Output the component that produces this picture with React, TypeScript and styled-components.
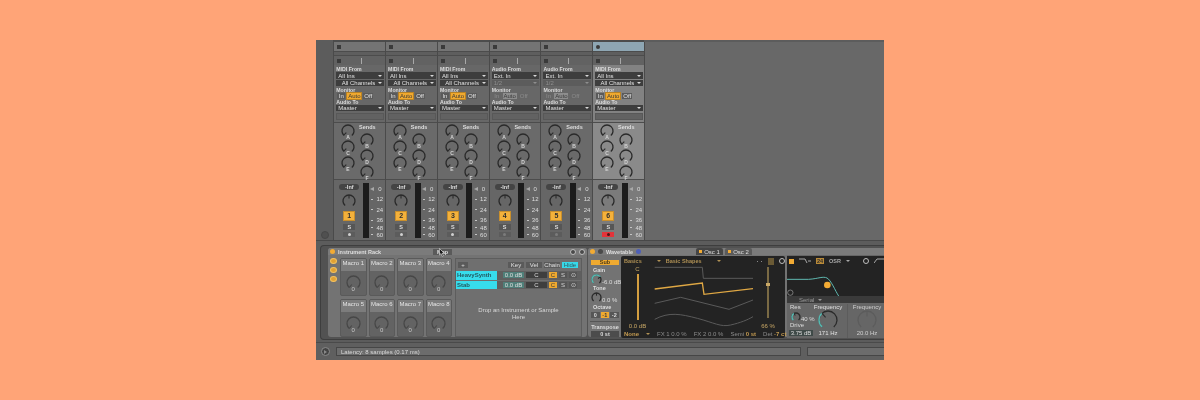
import React from "react";
import styled, { createGlobalStyle } from "styled-components";

const GlobalStyle = createGlobalStyle`
    html, body {
        margin: 0;
        height: 100%;
        background: #ffa477;
    }
    #root {
        height: 100%;
    }
`;

const Page = styled.div`
    height: 100vh;
    display: flex;
    align-items: center;
    justify-content: center;
    font-family: "Liberation Sans", Arial, sans-serif;
    font-weight: 700;
    font-size: 5.5px;
    line-height: 6px;
    color: #dedede;
`;

const Frame = styled.div`
    width: 568px;
    height: 320px;
    background: #5c5c5c;
    display: flex;
    flex-direction: column;
    overflow: hidden;
    filter: blur(0.45px);
`;

/* top half: session mixer */

const TopArea = styled.div`
    height: 200px;
    display: flex;
    flex: none;
`;

const Gutter = styled.div`
    width: 17.3px;
    flex: none;
    display: flex;
    align-items: flex-end;
    justify-content: center;
    padding-bottom: 1px;
`;

const GutterDot = styled.div`
    width: 8px;
    height: 8px;
    box-sizing: border-box;
    border-radius: 50%;
    background: #505050;
    border: 1px solid #474747;
`;

const Strip = styled.div`
    width: 51.8px;
    flex: none;
    box-sizing: border-box;
    border-left: 1px solid #4a4a4a;
    background: #4c4c4c;
    display: flex;
    flex-direction: column;
    padding-top: 2px;
`;

const TitleCell = styled.div<{ $selected?: boolean }>`
    height: 9px;
    background: ${(p) => (p.$selected ? "#8ea6b3" : "#747474")};
    display: flex;
    align-items: center;
    padding-left: 3px;
`;

const TitleMark = styled.div<{ $round?: boolean }>`
    width: 4px;
    height: 4px;
    background: #3a3a3a;
    border-radius: ${(p) => (p.$round ? "50%" : "0")};
`;

const ThinRow = styled.div`
    height: 3px;
    margin-top: 1px;
    background: #5e5e5e;
`;

const StopRow = styled.div`
    height: 9px;
    margin-top: 1px;
    background: #626262;
    display: flex;
    align-items: center;
    padding-left: 3px;
    gap: 20px;
`;

const StopLine = styled.div`
    width: 1px;
    height: 6px;
    background: #a8a8a8;
`;

const Routing = styled.div<{ $selected?: boolean }>`
    height: 57px;
    box-sizing: border-box;
    padding: 1px 1px 0 2px;
    display: flex;
    flex-direction: column;
    background: ${(p) => (p.$selected ? "#828282" : "#676767")};
`;

const RouteLabel = styled.div`
    height: 6px;
    color: #dcdcdc;
    font-size: 5.2px;
    white-space: nowrap;
`;

const Dropdown = styled.div<{ $dim?: boolean; $tall?: boolean }>`
    height: ${(p) => (p.$tall ? 7 : 6)}px;
    margin-bottom: 1px;
    background: ${(p) => (p.$dim ? "#5c5c5c" : "#3d3d3d")};
    color: ${(p) => (p.$dim ? "#8e8e8e" : "#e0e0e0")};
    display: flex;
    align-items: center;
    justify-content: space-between;
    padding: 0 2px;
    white-space: nowrap;
    font-weight: 400;
    font-size: 6px;
`;

const Caret = styled.span<{ $color?: string }>`
    width: 0;
    height: 0;
    flex: none;
    border-left: 2px solid transparent;
    border-right: 2px solid transparent;
    border-top: 2px solid ${(p) => p.$color ?? "#d8d8d8"};
`;

const MonitorRow = styled.div`
    height: 6px;
    display: flex;
    gap: 2px;
    padding-left: 1px;
`;

const MonitorButton = styled.div<{ $on?: boolean; $dim?: boolean; $width: number }>`
    width: ${(p) => p.$width}px;
    height: 6px;
    text-align: center;
    font-weight: 400;
    font-size: 6px;
    background: ${(p) => (p.$on ? (p.$dim ? "#8d8d8d" : "#f0a92f") : p.$dim ? "#666" : "#5a5a5a")};
    color: ${(p) => (p.$on ? "#3a3a3a" : p.$dim ? "#8c8c8c" : "#e2e2e2")};
    outline: ${(p) => (p.$on && !p.$dim ? "1px solid #b98224" : "none")};
`;

const BlankBox = styled.div`
    height: 5px;
    margin-top: 1px;
    background: #626262;
    border: 1px solid #585858;
`;

const Sends = styled.div<{ $selected?: boolean }>`
    height: 58px;
    box-sizing: border-box;
    border-top: 1px solid #4c4c4c;
    border-bottom: 1px solid #4c4c4c;
    display: flex;
    gap: 5px;
    padding: 1px 0 0 7px;
    background: ${(p) => (p.$selected ? "#8a8a8a" : "#6a6a6a")};
`;

const KnobColumn = styled.div`
    width: 14px;
    display: flex;
    flex-direction: column;
    align-items: center;
    gap: 2px;
`;

const SendsLabel = styled.div`
    height: 6px;
    margin-bottom: 1px;
    white-space: nowrap;
`;

const Mixer = styled.div<{ $selected?: boolean }>`
    flex: 1;
    display: flex;
    padding: 1px 0 0 5px;
    background: ${(p) => (p.$selected ? "#7b7b7b" : "#666")};
`;

const Controls = styled.div`
    width: 20px;
    display: flex;
    flex-direction: column;
    align-items: center;
    padding-top: 3px;
`;

const VolumePill = styled.div`
    width: 20px;
    height: 6px;
    border-radius: 3px;
    background: #444;
    text-align: center;
    margin-bottom: 4px;
`;

const TrackButton = styled.div`
    width: 12px;
    height: 10px;
    margin-top: 3px;
    background: #f4b13b;
    border: 1px solid #c98f2c;
    box-sizing: border-box;
    color: #2f2f2f;
    font-size: 7px;
    line-height: 8px;
    text-align: center;
`;

const SoloButton = styled.div`
    width: 12px;
    height: 6px;
    margin-top: 3px;
    background: #565656;
    text-align: center;
`;

const ArmButton = styled.div<{ $armed?: boolean; $dim?: boolean }>`
    width: 12px;
    height: 5px;
    margin-top: 2px;
    background: ${(p) => (p.$armed ? "#e2333a" : "#5c5c5c")};
    display: flex;
    align-items: center;
    justify-content: center;
    &::after {
        content: "";
        width: 3px;
        height: 3px;
        border-radius: 50%;
        background: ${(p) => (p.$armed ? "#4a1518" : p.$dim ? "#7c7c7c" : "#d0d0d0")};
    }
`;

const Meter = styled.div`
    width: 6px;
    height: 55px;
    margin: 2px 0 0 3.5px;
    background: linear-gradient(90deg, #1c1c1c 0 2.6px, #3c3c3c 2.6px 3.4px, #1c1c1c 3.4px);
`;

const Scale = styled.div`
    margin-left: 1.5px;
    padding-top: 5px;
    display: flex;
    flex-direction: column;
`;

const ScaleRow = styled.div<{ $top: number }>`
    height: 6px;
    margin-top: ${(p) => p.$top}px;
    width: 14px;
    display: flex;
    align-items: center;
    justify-content: space-between;
    font-weight: 400;
    font-size: 6px;
`;

const ScaleTick = styled.div`
    width: 2px;
    height: 1px;
    margin-left: 1px;
    background: #c4c4c4;
`;

const ScaleValue = styled.div`
    width: 9px;
    text-align: center;
`;

const Thumb = styled.div`
    width: 0;
    height: 0;
    border-top: 2.5px solid transparent;
    border-bottom: 2.5px solid transparent;
    border-right: 4px solid #a8a8a8;
`;

const EmptyArea = styled.div`
    flex: 1;
    background: #686868;
    border-left: 1px solid #4a4a4a;
    margin-top: 2px;
`;

/* bottom half: device chain */

const BottomArea = styled.div`
    height: 102px;
    flex: none;
    box-sizing: border-box;
    padding: 4px 0 2px 4px;
    border-top: 1px solid #484848;
`;

const DeviceTray = styled.div`
    height: 100%;
    box-sizing: border-box;
    background: #525252;
    border: 1px solid #3e3e3e;
    border-right: none;
    border-radius: 4px 0 0 4px;
    padding: 2px 0 2px 7px;
    display: flex;
    gap: 1px;
`;

const Device = styled.div<{ $width: number }>`
    width: ${(p) => p.$width}px;
    flex: none;
    background: #737373;
    border-radius: 3px;
    display: flex;
    flex-direction: column;
`;

const DeviceTitle = styled.div`
    height: 7px;
    flex: none;
    background: #7b7b7b;
    border-radius: 3px 3px 0 0;
    display: flex;
    align-items: center;
    padding-left: 2px;
    gap: 3px;
    white-space: nowrap;
`;

const Led = styled.div<{ $color?: string }>`
    width: 5px;
    height: 5px;
    flex: none;
    border-radius: 50%;
    background: ${(p) => p.$color ?? "#f2ab34"};
`;

const MapButton = styled.div`
    position: relative;
    width: 19px;
    height: 6px;
    margin-left: 49px;
    background: #5a5a5a;
    text-align: center;
`;

const Cursor = styled.svg`
    position: absolute;
    left: 6px;
    top: -1px;
    width: 6px;
    height: 9px;
`;

const TitleIcons = styled.div`
    margin-left: 115px;
    display: flex;
    gap: 3px;
`;

const RoundIcon = styled.div<{ $hollow?: boolean }>`
    width: 6px;
    height: 6px;
    flex: none;
    box-sizing: border-box;
    border-radius: 50%;
    background: ${(p) => (p.$hollow ? "transparent" : "#4a4a4a")};
    border: 1px solid #bdbdbd;
`;

const RackBody = styled.div`
    flex: 1;
    display: flex;
    padding: 3px 0 0 2px;
`;

const RackSide = styled.div`
    width: 10px;
    flex: none;
    display: flex;
    flex-direction: column;
    gap: 3px;
`;

const RackSideIcon = styled.div`
    width: 7px;
    height: 6px;
    border-radius: 50%;
    background: #e2a233;
    border: 1px solid #f3c15f;
    box-sizing: border-box;
`;

const MacroGrid = styled.div`
    display: grid;
    grid-template-columns: repeat(4, 26.5px);
    grid-template-rows: repeat(2, 38px);
    column-gap: 2px;
    row-gap: 3px;
`;

const MacroCell = styled.div`
    border: 1px solid #5a5a5a;
    border-radius: 2px;
    background: #636363;
    display: flex;
    flex-direction: column;
    align-items: center;
    box-sizing: border-box;
    font-weight: 400;
    font-size: 6px;
    overflow: hidden;
`;

const MacroName = styled.div`
    width: 100%;
    height: 12px;
    flex: none;
    background: #7c7c7c;
    padding-top: 1px;
    box-sizing: border-box;
    text-align: center;
    white-space: nowrap;
    color: #e4e4e4;
`;

const MacroValue = styled.div`
    margin-top: -4px;
    color: #c8c8c8;
`;

const KnobSlot = styled.div`
    margin-top: 4px;
    display: flex;
`;

const ChainPanel = styled.div`
    width: 127px;
    height: 79px;
    margin-left: 3px;
    box-sizing: border-box;
    border: 1px solid #5d5d5d;
    background: #6f6f6f;
    display: flex;
    flex-direction: column;
`;

const ChainHead = styled.div`
    height: 6px;
    margin-top: 3px;
    padding-left: 2px;
    display: flex;
    gap: 2px;
    font-weight: 400;
    font-size: 6px;
`;

const PlusButton = styled.div`
    width: 10px;
    height: 6px;
    margin-right: 38px;
    background: #5a5a5a;
    text-align: center;
`;

const ChainToggle = styled.div<{ $on?: boolean }>`
    width: 16px;
    height: 6px;
    text-align: center;
    background: ${(p) => (p.$on ? "#37d8e8" : "#5a5a5a")};
    color: ${(p) => (p.$on ? "#33575c" : "#e0e0e0")};
`;

const ChainList = styled.div`
    margin-top: 3px;
    display: flex;
    flex-direction: column;
    gap: 1px;
`;

const ChainRow = styled.div`
    height: 8.5px;
    display: flex;
    align-items: center;
    background: #5f5f5f;
    font-weight: 400;
    font-size: 6px;
`;

const ChainName = styled.div`
    width: 41px;
    height: 100%;
    flex: none;
    background: #37dcec;
    color: #235a62;
    font-weight: 700;
    padding: 1px 0 0 1px;
    box-sizing: border-box;
`;

const ChainVolume = styled.div`
    width: 21px;
    height: 6px;
    margin-left: 6px;
    background: #4f7f79;
    text-align: center;
`;

const ChainPan = styled.div`
    width: 21px;
    height: 6px;
    margin-left: 2px;
    background: #3e3e3e;
    text-align: center;
`;

const ChainKey = styled.div<{ $on?: boolean }>`
    width: 8px;
    height: 6px;
    margin-left: 2px;
    text-align: center;
    background: ${(p) => (p.$on ? "#efa92f" : "#555")};
    color: ${(p) => (p.$on ? "#3a3a3a" : "#d8d8d8")};
`;

const DropHint = styled.div`
    flex: 1;
    display: flex;
    align-items: center;
    justify-content: center;
    text-align: center;
    line-height: 7.5px;
    font-weight: 400;
    font-size: 6px;
    color: #d8d8d8;
    padding-top: 3px;
`;

const WaveTab = styled.div<{ $active?: boolean; $offset?: number }>`
    width: 27px;
    height: 7px;
    margin-left: ${(p) => p.$offset ?? 0}px;
    flex: none;
    border-radius: 2px 2px 0 0;
    background: ${(p) => (p.$active ? "#454545" : "#5b5b5b")};
    display: flex;
    align-items: center;
    justify-content: center;
    gap: 2px;
    font-weight: 400;
    font-size: 6px;
`;

const TabMark = styled.div`
    width: 3px;
    height: 3px;
    background: #f2ab34;
`;

const WaveBody = styled.div`
    flex: 1;
    display: flex;
`;

const OscColumn = styled.div`
    width: 33px;
    flex: none;
    display: flex;
    flex-direction: column;
    box-sizing: border-box;
    padding: 0 1px 0 2px;
`;

const SubButton = styled.div`
    height: 5px;
    margin: 5px 1px 2px 1px;
    background: #f0aa30;
    color: #4a3a1a;
    text-align: center;
    line-height: 5px;
`;

const OscLabel = styled.div<{ $top?: number }>`
    height: 6px;
    margin-top: ${(p) => p.$top ?? 0}px;
    padding-left: 3px;
    white-space: nowrap;
`;

const KnobLine = styled.div<{ $height?: number }>`
    display: flex;
    align-items: flex-end;
    height: ${(p) => p.$height ?? 12}px;
    padding-left: 1px;
    white-space: nowrap;
    font-weight: 400;
    font-size: 6px;
`;

const OctaveRow = styled.div`
    display: flex;
    gap: 1px;
    margin-top: 2px;
    padding-left: 1px;
`;

const OctaveButton = styled.div<{ $on?: boolean }>`
    width: 8.5px;
    height: 6px;
    text-align: center;
    background: ${(p) => (p.$on ? "#f0aa30" : "#565656")};
    color: ${(p) => (p.$on ? "#3a3a3a" : "#dcdcdc")};
`;

const TransposeBox = styled.div`
    margin-top: 3px;
    padding-top: 2px;
    border-top: 1px solid #565656;
    text-align: center;
`;

const TransposeValue = styled.div`
    height: 6px;
    margin: 1px 1px 0;
    background: #4c4c4c;
`;

const Display = styled.div`
    width: 164px;
    height: 82px;
    flex: none;
    margin-top: 1px;
    background: #232323;
    border-radius: 2px;
    display: flex;
    flex-direction: column;
    color: #b19255;
`;

const DisplayHead = styled.div`
    height: 10px;
    flex: none;
    display: flex;
    align-items: center;
    padding: 0 3px;
    white-space: nowrap;
`;

const HeadGap = styled.div<{ $width: number }>`
    width: ${(p) => p.$width}px;
    flex: none;
`;

const HeadDots = styled.div`
    width: 5px;
    height: 1px;
    flex: none;
    background: linear-gradient(90deg, #8a8a8a 0 1px, transparent 1px 4px, #8a8a8a 4px);
`;

const DisplayMiddle = styled.div`
    height: 64px;
    flex: none;
    display: flex;
`;

const GainColumn = styled.div<{ $width: number }>`
    width: ${(p) => p.$width}px;
    flex: none;
    display: flex;
    flex-direction: column;
    align-items: center;
    color: #c9a866;
    font-weight: 400;
    font-size: 6px;
`;

const Fader = styled.div<{ $height: number; $color: string; $top: number }>`
    position: relative;
    width: 2px;
    height: ${(p) => p.$height}px;
    margin-top: ${(p) => p.$top}px;
    background: ${(p) => p.$color};
`;

const FaderHandle = styled.div`
    position: absolute;
    left: -1px;
    top: 16px;
    width: 4px;
    height: 3px;
    background: #c9a866;
`;

const GainValue = styled.div<{ $top: number }>`
    margin-top: ${(p) => p.$top}px;
    white-space: nowrap;
`;

const WaveSvg = styled.svg`
    flex: none;
    display: block;
`;

const DisplayFoot = styled.div`
    height: 8px;
    flex: none;
    display: flex;
    align-items: center;
    padding-left: 3px;
    color: #8c8c8c;
    font-weight: 400;
    font-size: 6px;
    white-space: nowrap;
    gap: 7px;
`;

const FootStrong = styled.span`
    color: #c39a50;
    font-weight: 700;
`;

const FilterColumn = styled.div`
    width: 100px;
    flex: none;
    margin-left: 2px;
    display: flex;
    flex-direction: column;
    background: #666;
`;

const FilterHead = styled.div`
    height: 10px;
    margin-top: 1px;
    background: #232323;
    display: flex;
    align-items: center;
    gap: 5px;
    padding-left: 2px;
    color: #a8a8a8;
    white-space: nowrap;
`;

const SquareOn = styled.div<{ $dim?: boolean }>`
    width: ${(p) => (p.$dim ? 6 : 5)}px;
    height: ${(p) => (p.$dim ? 7 : 5)}px;
    flex: none;
    background: ${(p) => (p.$dim ? "#6a5a35" : "#f2ab34")};
`;

const OrangeBadge = styled.div`
    width: 8px;
    height: 6px;
    background: #b98a38;
    color: #2a2a2a;
    text-align: center;
`;

const ShapeIcon = styled.svg`
    flex: none;
    width: 12px;
    height: 6px;
`;

const FilterGraph = styled.div`
    height: 30px;
    background: #232323;
    display: flex;
`;

const SerialRow = styled.div`
    height: 7px;
    background: #3a3a3a;
    padding-left: 12px;
    display: flex;
    align-items: center;
    gap: 4px;
    font-weight: 400;
    font-size: 6px;
    color: #9a9a9a;
`;

const FilterControls = styled.div`
    flex: 1;
    display: flex;
    padding: 1px 0 0 3px;
    font-weight: 400;
    font-size: 6px;
`;

const ResColumn = styled.div`
    width: 23px;
    flex: none;
    display: flex;
    flex-direction: column;
`;

const DriveBox = styled.div`
    width: 24px;
    height: 6px;
    background: #3f4a48;
    margin: 2px 0 0 -1px;
    text-align: center;
`;

const FreqColumn = styled.div`
    width: 30px;
    flex: none;
    display: flex;
    flex-direction: column;
    align-items: center;
    white-space: nowrap;
    color: #e0e0e0;
`;

const DimFreqColumn = styled(FreqColumn)`
    width: 36px;
    border-left: 1px solid #5c5c5c;
    margin-left: 4px;
    padding-left: 1px;
    color: #cfcfcf;
`;

const StatusBar = styled.div`
    flex: 1;
    display: flex;
    align-items: center;
    padding-left: 5px;
    background: #5f5f5f;
    border-top: 1px solid #4a4a4a;
`;

const PlayDot = styled.div`
    width: 9px;
    height: 9px;
    flex: none;
    box-sizing: border-box;
    border-radius: 50%;
    background: #444;
    border: 1px solid #8a8a8a;
    margin-right: 6px;
    display: flex;
    align-items: center;
    justify-content: center;
    &::after {
        content: "";
        width: 0;
        height: 0;
        border-top: 2px solid transparent;
        border-bottom: 2px solid transparent;
        border-left: 3px solid #8a8a8a;
    }
`;

const StatusField = styled.div<{ $width: number }>`
    width: ${(p) => p.$width}px;
    height: 9px;
    flex: none;
    margin-right: 6px;
    background: #6c6c6c;
    border: 1px solid #464646;
    box-sizing: border-box;
    padding: 1px 0 0 4px;
    font-weight: 400;
    font-size: 6px;
    color: #dadada;
`;

const KnobSvg = styled.svg`
    display: block;
    overflow: visible;
    flex: none;
`;

/* knob drawn as an open ring with a needle */

const polar = (c: number, r: number, deg: number) => {
    const a = ((deg - 90) * Math.PI) / 180;
    return [c + r * Math.cos(a), c + r * Math.sin(a)];
};

const arc = (c: number, r: number, from: number, to: number) => {
    const [x1, y1] = polar(c, r, from);
    const [x2, y2] = polar(c, r, to);
    return `M${x1} ${y1}A${r} ${r} 0 ${to - from > 180 ? 1 : 0} 1 ${x2} ${y2}`;
};

type KnobProps = {
    size?: number;
    value?: number;
    color?: string;
    accent?: string;
    letter?: string;
};

const Knob: React.FC<KnobProps> = ({ size = 14, value = 0.5, color = "#2a2a2a", accent, letter }) => {
    const c = size / 2;
    const r = c - 1;
    const angle = -140 + value * 280;
    const [nx, ny] = polar(c, r, angle);
    const [mx, my] = polar(c, r * 0.4, angle);
    return (
        <KnobSvg width={size} height={size}>
            <path d={arc(c, r, -140, 140)} fill="none" stroke={color} strokeWidth={1.3} />
            {accent && <path d={arc(c, r, -140, angle)} fill="none" stroke={accent} strokeWidth={1.5} />}
            <line x1={mx} y1={my} x2={nx} y2={ny} stroke={color} strokeWidth={1.1} />
            {letter && (
                <text x={c} y={size + 0.5} textAnchor="middle" fontSize={5} fontWeight={700} fill="#d4d4d4">
                    {letter}
                </text>
            )}
        </KnobSvg>
    );
};

type Track = {
    n: number;
    audio: boolean;
    selected?: boolean;
};

const tracks: Track[] = [
    { n: 1, audio: false },
    { n: 2, audio: false },
    { n: 3, audio: false },
    { n: 4, audio: true },
    { n: 5, audio: true },
    { n: 6, audio: false, selected: true },
];

const scale: [string, number][] = [
    ["0", 0],
    ["12", 4],
    ["24", 4.7],
    ["36", 4.7],
    ["48", 1.3],
    ["60", 1],
];

const TrackStrip: React.FC<{ track: Track }> = ({ track }) => (
    <Strip>
        <TitleCell $selected={track.selected}>
            <TitleMark $round={track.selected} />
        </TitleCell>
        <ThinRow />
        <StopRow>
            <TitleMark />
            <StopLine />
        </StopRow>
        <Routing $selected={track.selected}>
            <RouteLabel>{track.audio ? "Audio From" : "MIDI From"}</RouteLabel>
            <Dropdown $tall>
                {track.audio ? "Ext. In" : "All Ins"}
                <Caret />
            </Dropdown>
            {track.audio ? (
                <Dropdown $dim>
                    1/2
                    <Caret $color="#8e8e8e" />
                </Dropdown>
            ) : (
                <Dropdown>
                    &nbsp;&nbsp;All Channels
                    <Caret />
                </Dropdown>
            )}
            <RouteLabel>Monitor</RouteLabel>
            <MonitorRow>
                <MonitorButton $width={8} $dim={track.audio}>
                    In
                </MonitorButton>
                <MonitorButton $width={14} $on $dim={track.audio}>
                    Auto
                </MonitorButton>
                <MonitorButton $width={10} $dim={track.audio}>
                    Off
                </MonitorButton>
            </MonitorRow>
            <RouteLabel>Audio To</RouteLabel>
            <Dropdown>
                Master
                <Caret />
            </Dropdown>
            <BlankBox />
        </Routing>
        <Sends $selected={track.selected}>
            <KnobColumn>
                <Knob letter="A" value={0.02} />
                <Knob letter="C" value={0.02} />
                <Knob letter="E" value={0.02} />
            </KnobColumn>
            <KnobColumn>
                <SendsLabel>Sends</SendsLabel>
                <Knob letter="B" value={0.02} />
                <Knob letter="D" value={0.02} />
                <Knob letter="F" value={0.02} />
            </KnobColumn>
        </Sends>
        <Mixer $selected={track.selected}>
            <Controls>
                <VolumePill>-Inf</VolumePill>
                <Knob value={0.5} />
                <TrackButton>{track.n}</TrackButton>
                <SoloButton>S</SoloButton>
                <ArmButton $armed={track.selected} $dim={track.audio} />
            </Controls>
            <Meter />
            <Scale>
                {scale.map(([label, top], i) => (
                    <ScaleRow key={label} $top={top}>
                        {i === 0 ? <Thumb /> : <ScaleTick />}
                        <ScaleValue>{label}</ScaleValue>
                    </ScaleRow>
                ))}
            </Scale>
        </Mixer>
    </Strip>
);

const macros = ["Macro 1", "Macro 2", "Macro 3", "Macro 4", "Macro 5", "Macro 6", "Macro 7", "Macro 8"];

const InstrumentRack: React.FC = () => (
    <Device $width={259}>
        <DeviceTitle>
            <Led />
            Instrument Rack
            <MapButton>
                Map
                <Cursor viewBox="0 0 6 9">
                    <path d="M0.5 0.5V7L2 5.6L3.2 8.4L4.4 7.8L3.2 5.2H5.2Z" fill="#1c1c1c" stroke="#e8e8e8" strokeWidth={0.6} />
                </Cursor>
            </MapButton>
            <TitleIcons>
                <RoundIcon />
                <RoundIcon />
            </TitleIcons>
        </DeviceTitle>
        <RackBody>
            <RackSide>
                <RackSideIcon />
                <RackSideIcon />
                <RackSideIcon />
            </RackSide>
            <MacroGrid>
                {macros.map((m) => (
                    <MacroCell key={m}>
                        <MacroName>{m}</MacroName>
                        <KnobSlot>
                            <Knob size={15} value={0} color="#474747" />
                        </KnobSlot>
                        <MacroValue>0</MacroValue>
                    </MacroCell>
                ))}
            </MacroGrid>
            <ChainPanel>
                <ChainHead>
                    <PlusButton>+</PlusButton>
                    <ChainToggle>Key</ChainToggle>
                    <ChainToggle>Vel</ChainToggle>
                    <ChainToggle>Chain</ChainToggle>
                    <ChainToggle $on>Hide</ChainToggle>
                </ChainHead>
                <ChainList>
                    {["HeavySynth", "Stab"].map((name) => (
                        <ChainRow key={name}>
                            <ChainName>{name}</ChainName>
                            <ChainVolume>0.0 dB</ChainVolume>
                            <ChainPan>C</ChainPan>
                            <ChainKey $on>C</ChainKey>
                            <ChainKey>S</ChainKey>
                            <ChainKey>⊙</ChainKey>
                        </ChainRow>
                    ))}
                </ChainList>
                <DropHint>
                    Drop an Instrument or Sample
                    <br />
                    Here
                </DropHint>
            </ChainPanel>
        </RackBody>
    </Device>
);

const Wavetable: React.FC = () => (
    <Device $width={300}>
        <DeviceTitle>
            <Led />
            <Led $color="#4a4a4a" />
            Wavetable
            <Led $color="#4d5fb8" />
            <WaveTab $active $offset={52}>
                <TabMark />
                Osc 1
            </WaveTab>
            <WaveTab $offset={-1}>
                <TabMark />
                Osc 2
            </WaveTab>
        </DeviceTitle>
        <WaveBody>
            <OscColumn>
                <SubButton>Sub</SubButton>
                <OscLabel>Gain</OscLabel>
                <KnobLine>
                    <Knob size={11} value={0.7} accent="#58b8b0" />
                    -6.0 dB
                </KnobLine>
                <OscLabel>Tone</OscLabel>
                <KnobLine>
                    <Knob size={11} value={0.5} />
                    0.0 %
                </KnobLine>
                <OscLabel $top={1}>Octave</OscLabel>
                <OctaveRow>
                    <OctaveButton>0</OctaveButton>
                    <OctaveButton $on>-1</OctaveButton>
                    <OctaveButton>-2</OctaveButton>
                </OctaveRow>
                <TransposeBox>
                    Transpose
                    <TransposeValue>0 st</TransposeValue>
                </TransposeBox>
            </OscColumn>
            <Display>
                <DisplayHead>
                    Basics
                    <HeadGap $width={15} />
                    <Caret $color="#b19255" />
                    <HeadGap $width={5} />
                    Basic Shapes
                    <HeadGap $width={15} />
                    <Caret $color="#b19255" />
                    <HeadGap $width={36} />
                    <HeadDots />
                    <HeadGap $width={6} />
                    <SquareOn $dim />
                    <HeadGap $width={5} />
                    <RoundIcon $hollow />
                </DisplayHead>
                <DisplayMiddle>
                    <GainColumn $width={33}>
                        C
                        <Fader $height={46} $color="#d49f40" $top={2} />
                        <GainValue $top={3}>0.0 dB</GainValue>
                    </GainColumn>
                    <WaveSvg width={99} height={64} viewBox="210 78 297 192">
                        <polyline points="212,82 355,82 358,115 507,115" fill="none" stroke="#5a5a5a" strokeWidth={3} />
                        <polyline points="212,147 355,129 360,163 507,146" fill="none" stroke="#e0a844" strokeWidth={4} />
                        <polyline points="212,190 290,172 435,208 507,180" fill="none" stroke="#5a5a5a" strokeWidth={3} />
                        <path d="M212 238C255 215 290 222 340 235S410 262 440 255 490 240 507 230" fill="none" stroke="#5a5a5a" strokeWidth={3} />
                    </WaveSvg>
                    <GainColumn $width={30}>
                        <Fader $height={51} $color="#7a6a44" $top={1}>
                            <FaderHandle />
                        </Fader>
                        <GainValue $top={5}>66 %</GainValue>
                    </GainColumn>
                </DisplayMiddle>
                <DisplayFoot>
                    <FootStrong>None</FootStrong>
                    <Caret $color="#b19255" />
                    <span>FX 1 0.0 %</span>
                    <span>FX 2 0.0 %</span>
                    <span>
                        Semi <FootStrong>0 st</FootStrong>
                    </span>
                    <span>
                        Det <FootStrong>-7 ct</FootStrong>
                    </span>
                </DisplayFoot>
            </Display>
            <FilterColumn>
                <FilterHead>
                    <SquareOn />
                    <ShapeIcon viewBox="0 0 12 6">
                        <path d="M0 1H6L8 5M9 3H12" fill="none" stroke="#a8a8a8" strokeWidth={1} />
                    </ShapeIcon>
                    <OrangeBadge>24</OrangeBadge>
                    OSR
                    <Caret $color="#a8a8a8" />
                    <HeadGap $width={3} />
                    <RoundIcon $hollow />
                    <ShapeIcon viewBox="0 0 12 6">
                        <path d="M0 5L3 1H12" fill="none" stroke="#a8a8a8" strokeWidth={1} />
                    </ShapeIcon>
                </FilterHead>
                <FilterGraph>
                    <svg width={96} height={30} viewBox="20 60 288 90">
                        <path d="M20 100H85C115 98 128 90 140 96S165 135 175 150" fill="none" stroke="#5fb8b0" strokeWidth={3} />
                        <circle cx={141} cy={117} r={10} fill="#f2ab34" />
                        <circle cx={30} cy={140} r={8} fill="none" stroke="#a0a0a0" strokeWidth={2} />
                    </svg>
                </FilterGraph>
                <SerialRow>
                    Serial
                    <Caret $color="#9a9a9a" />
                </SerialRow>
                <FilterControls>
                    <ResColumn>
                        <span>Res</span>
                        <KnobLine $height={12}>
                            <Knob size={10} value={0.4} accent="#58b8b0" />
                            40 %
                        </KnobLine>
                        <span>Drive</span>
                        <DriveBox>3.75 dB</DriveBox>
                    </ResColumn>
                    <FreqColumn>
                        Frequency
                        <Knob size={20} value={0.35} accent="#58b8b0" />
                        171 Hz
                    </FreqColumn>
                    <DimFreqColumn>
                        Frequency
                        <Knob size={20} value={0.5} color="#5c5c5c" />
                        20.0 Hz
                    </DimFreqColumn>
                </FilterControls>
            </FilterColumn>
        </WaveBody>
    </Device>
);

export default function App() {
    return (
        <Page>
            <GlobalStyle />
            <Frame>
                <TopArea>
                    <Gutter>
                        <GutterDot />
                    </Gutter>
                    {tracks.map((t) => (
                        <TrackStrip key={t.n} track={t} />
                    ))}
                    <EmptyArea />
                </TopArea>
                <BottomArea>
                    <DeviceTray>
                        <InstrumentRack />
                        <Wavetable />
                    </DeviceTray>
                </BottomArea>
                <StatusBar>
                    <PlayDot />
                    <StatusField $width={465}>Latency: 8 samples (0.17 ms)</StatusField>
                    <StatusField $width={90} />
                </StatusBar>
            </Frame>
        </Page>
    );
}
